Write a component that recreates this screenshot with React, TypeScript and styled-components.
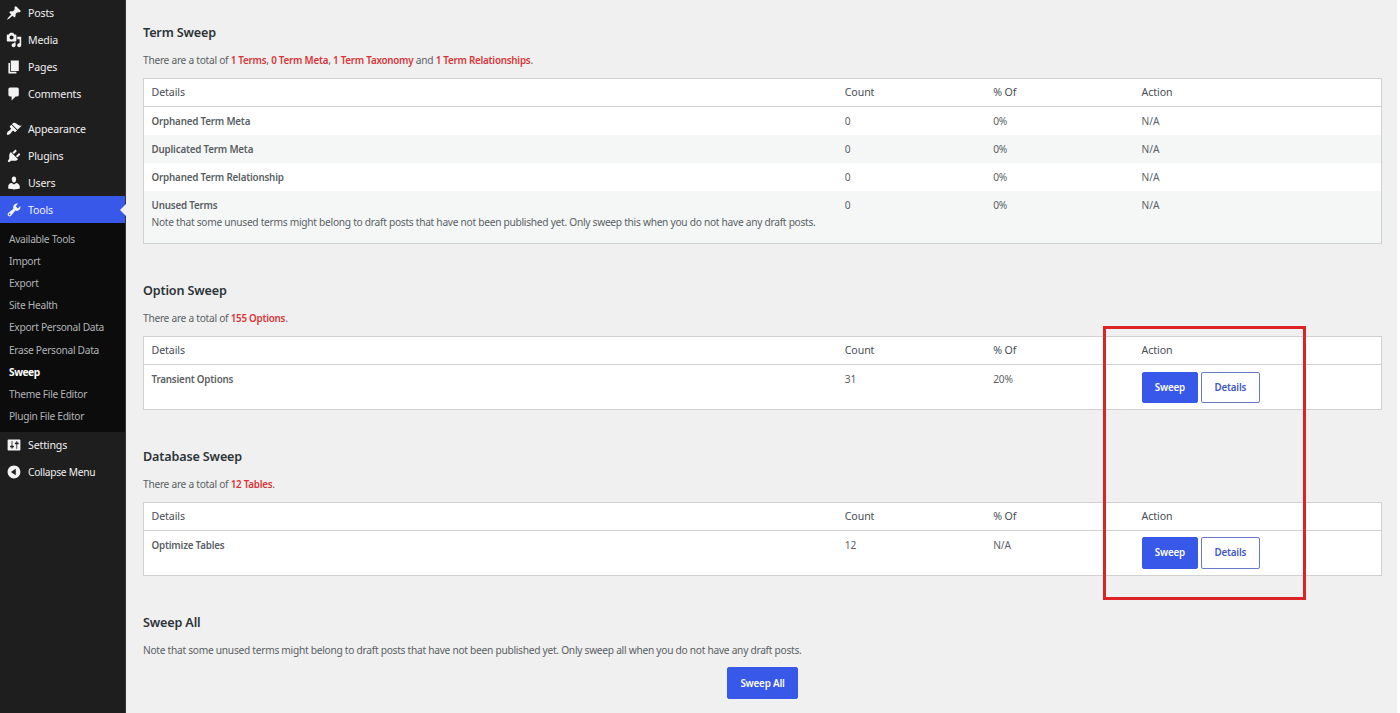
import React from "react";
import styled, { createGlobalStyle, css } from "styled-components";

const GlobalStyle = createGlobalStyle`
  * { box-sizing: border-box; }
  html, body { margin: 0; padding: 0; background: #fdfdfd; }
  body {
    font-family: "Noto Sans", "Open Sans", sans-serif;
    font-size: 10.2px;
    color: #5a5f64;
    overflow: hidden;
  }
`;

const Page = styled.div`
  position: relative;
  display: flex;
  width: 1400px;
  height: 713px;
  overflow: hidden;
  background: #fdfdfd;
`;

const Sidebar = styled.nav`
  flex: none;
  width: 126px;
  background: #1e1e1e;
  border-right: 1px solid #343434;
`;

const MenuGroup = styled.div`
  padding-bottom: 8.6px;
`;

const MenuItem = styled.div<{ $active?: boolean }>`
  position: relative;
  display: flex;
  align-items: center;
  height: 26.8px;
  padding-left: 6px;
  gap: 6px;
  color: #f0f0f1;
  white-space: nowrap;
  background: ${(p) => (p.$active ? "#3858e9" : "transparent")};
  ${(p) =>
    p.$active &&
    css`
      &::after {
        content: "";
        position: absolute;
        right: -1px;
        top: 7.4px;
        border: 6px solid transparent;
        border-left: 0;
        border-right-color: #f0f0f1;
      }
    `}
`;

const MenuIcon = styled.svg`
  flex: none;
  width: 16px;
  height: 16px;
  fill: #f3f3f3;
`;

const Label = styled.span<{ $small?: boolean }>`
  font-size: ${(p) => (p.$small ? 10.2 : 10.6)}px;
  letter-spacing: ${(p) => (p.$small ? -0.27 : -0.15)}px;
`;

const SubMenu = styled.div`
  padding: 4.9px 0 4.9px 9px;
  background: #0c0c0d;
`;

const SubItem = styled.div<{ $current?: boolean }>`
  height: 22.15px;
  line-height: 22.15px;
  white-space: nowrap;
  letter-spacing: ${(p) => (p.$current ? -0.45 : -0.3)}px;
  font-weight: ${(p) => (p.$current ? 700 : 400)};
  color: ${(p) => (p.$current ? "#fff" : "#b1b3b5")};
`;

const Content = styled.main`
  flex: none;
  width: 1271px;
  padding: 22.3px 15px 0 17px;
  background: #f0f0f0;
`;

const Section = styled.section<{ $height: number }>`
  height: ${(p) => p.$height}px;
`;

const Heading = styled.h3`
  margin: 0;
  height: 20px;
  line-height: 22px;
  font-size: 12.6px;
  font-weight: 600;
  letter-spacing: -0.15px;
  color: #2c3338;
`;

const Summary = styled.p`
  margin: 10px 0 9.7px;
  height: 16px;
  line-height: 16px;
  letter-spacing: -0.275px;
`;

const Total = styled.strong`
  font-size: 9.8px;
  font-weight: 600;
  letter-spacing: -0.23px;
  color: #d63638;
`;

const Table = styled.div`
  border: 1px solid #cfd1d3;
  background: #fff;
`;

const Row = styled.div<{ $height: number; $striped?: boolean }>`
  display: grid;
  grid-template-columns: 56% 12% 12% 20%;
  height: ${(p) => p.$height}px;
  padding-top: 6px;
  line-height: 17px;
  letter-spacing: -0.12px;
  background: ${(p) => (p.$striped ? "#f5f7f7" : "#fff")};
`;

const HeaderRow = styled(Row)`
  padding-top: 5px;
  font-size: 10.6px;
  letter-spacing: -0.08px;
  color: #484e53;
  border-bottom: 1px solid #cfd1d3;
`;

const Cell = styled.div`
  padding-left: 8px;
  white-space: nowrap;

  &:first-child {
    padding-left: 7.5px;
  }
`;

const Name = styled.strong`
  display: block;
  font-size: 9.8px;
  font-weight: 600;
  letter-spacing: -0.19px;
`;

const Note = styled.span`
  letter-spacing: -0.28px;
`;

const Actions = styled.div`
  display: flex;
  gap: 3px;
  padding-top: 0.3px;
`;

const Button = styled.button<{ $primary?: boolean; $width: number }>`
  width: ${(p) => p.$width}px;
  height: 31.5px;
  padding: 0 0 0.4px;
  font: 600 9.8px "Noto Sans", "Open Sans", sans-serif;
  letter-spacing: -0.18px;
  border: 1px solid ${(p) => (p.$primary ? "#3858e9" : "#6a79c8")};
  border-radius: 2px;
  color: ${(p) => (p.$primary ? "#fff" : "#4458c4")};
  background: ${(p) => (p.$primary ? "#3858e9" : "#fff")};
`;

const Centered = styled.div`
  display: flex;
  justify-content: center;
`;

const Highlight = styled.div`
  position: absolute;
  left: 1103px;
  top: 326px;
  width: 203px;
  height: 274px;
  border: 3px solid #dc2426;
  pointer-events: none;
`;

const icons = {
  posts:
    "M10.44 3.02l1.82-1.82 6.36 6.35-1.83 1.82c-1.05-.68-2.48-.57-3.41.36l-.75.75c-.92.93-1.04 2.35-.35 3.41l-1.83 1.82-2.41-2.41-2.8 2.79c-.42.42-3.38 2.71-3.8 2.29s1.86-3.39 2.28-3.81l2.79-2.79L4.1 9.36l1.83-1.82c1.05.69 2.48.57 3.4-.36l.75-.75c.93-.92 1.05-2.35.36-3.41z",
  media:
    "M13 11V4c0-.55-.45-1-1-1h-1.67L9 1H5L3.67 3H2c-.55 0-1 .45-1 1v7c0 .55.45 1 1 1h10c.55 0 1-.45 1-1zM7 4.5c1.38 0 2.5 1.12 2.5 2.5S8.38 9.5 7 9.5 4.5 8.38 4.5 7 5.62 4.5 7 4.5zM14 6h5v10.5c0 1.38-1.12 2.5-2.5 2.5S14 17.88 14 16.5s1.12-2.5 2.5-2.5c.17 0 .34.02.5.05V9h-3V6zm-4 8.05V13h2v3.5c0 1.38-1.12 2.5-2.5 2.5S7 17.88 7 16.5 8.12 14 9.5 14c.17 0 .34.02.5.05z",
  pages: "M6 15V2h10v13H6zm-1 1h8v2H3V5h2v11z",
  comments:
    "M5 2h9c1.1 0 2 .9 2 2v7c0 1.1-.9 2-2 2h-2l-5 5v-5H5c-1.1 0-2-.9-2-2V4c0-1.1.9-2 2-2z",
  appearance:
    "M14.48 11.06L7.41 3.99l1.5-1.5c.5-.56 2.3-.47 3.51.32 1.21.8 1.43 1.28 2.91 2.1 1.18.64 2.45 1.26 4.45.85zm-.71.71L6.7 4.7 4.93 6.47c-.39.39-.39 1.02 0 1.41l1.06 1.06c.39.39.39 1.03 0 1.42-.6.6-1.43 1.11-2.21 1.69-.35.26-.7.53-1.01.84C1.43 14.23.4 16.08 1.4 17.07c.99 1 2.84-.03 4.18-1.36.31-.31.58-.66.85-1.02.57-.78 1.08-1.61 1.69-2.21.39-.39 1.02-.39 1.41 0l1.06 1.06c.39.39 1.02.39 1.41 0z",
  plugins:
    "M13.11 4.36L9.87 7.6 8 5.73l3.24-3.24c.35-.34 1.05-.2 1.56.32.52.51.66 1.21.31 1.55zm-8 1.77l.91-1.12 9.01 9.01-1.19.84c-.71.71-2.63 1.16-3.82 1.16H6.14L4.9 17.26c-.59.59-1.54.59-2.12 0-.59-.58-.59-1.53 0-2.12l1.24-1.24v-3.88c0-1.13.4-3.19 1.09-3.89zm7.26 3.97l3.24-3.24c.34-.35 1.04-.21 1.55.31.52.51.66 1.21.31 1.55l-3.24 3.25z",
  users:
    "M10 9.25c-2.27 0-2.73-3.44-2.73-3.44C7 4.02 7.82 2 9.97 2c2.16 0 2.98 2.02 2.71 3.81 0 0-.41 3.44-2.68 3.44zm0 2.57L12.72 10c2.39 0 4.52 2.33 4.52 4.53v2.49s-3.65 1.13-7.24 1.13c-3.65 0-7.24-1.13-7.24-1.13v-2.49c0-2.25 1.94-4.48 4.47-4.48z",
  tools:
    "M16.68 9.77c-1.34 1.34-3.3 1.67-4.95.99l-5.41 6.52c-.99.99-2.59.99-3.58 0s-.99-2.59 0-3.57l6.52-5.42c-.68-1.65-.35-3.61.99-4.95 1.28-1.28 3.12-1.62 4.72-1.06l-2.89 2.89 2.82 2.82 2.86-2.87c.53 1.58.18 3.39-1.08 4.65zM3.81 16.21c.4.39 1.04.39 1.43 0 .4-.4.4-1.04 0-1.43-.39-.4-1.03-.4-1.43 0-.39.39-.39 1.03 0 1.43z",
  settings:
    "M18 16V4c0-.55-.45-1-1-1H3c-.55 0-1 .45-1 1v12c0 .55.45 1 1 1h14c.55 0 1-.45 1-1zM8 11h1c.55 0 1 .45 1 1s-.45 1-1 1H8v1.5c0 .28-.22.5-.5.5s-.5-.22-.5-.5V13H6c-.55 0-1-.45-1-1s.45-1 1-1h1V5.5c0-.28.22-.5.5-.5s.5.22.5.5V11zm5-2h-1c-.55 0-1-.45-1-1s.45-1 1-1h1V5.5c0-.28.22-.5.5-.5s.5.22.5.5V7h1c.55 0 1 .45 1 1s-.45 1-1 1h-1v5.5c0 .28-.22.5-.5.5s-.5-.22-.5-.5V9z",
  collapse:
    "M10 2c4.42 0 8 3.58 8 8s-3.58 8-8 8-8-3.58-8-8 3.58-8 8-8zm2.2 12V6L6.2 10z",
};

type IconName = keyof typeof icons;

function NavItem({
  icon,
  label,
  active,
  small,
}: {
  icon: IconName;
  label: string;
  active?: boolean;
  small?: boolean;
}) {
  return (
    <MenuItem $active={active}>
      <MenuIcon viewBox="0 0 20 20">
        <path d={icons[icon]} fillRule="evenodd" />
      </MenuIcon>
      <Label $small={small}>{label}</Label>
    </MenuItem>
  );
}

function TableHeader() {
  return (
    <HeaderRow $height={28.3}>
      <Cell>Details</Cell>
      <Cell>Count</Cell>
      <Cell>% Of</Cell>
      <Cell>Action</Cell>
    </HeaderRow>
  );
}

const termRows = [
  { name: "Orphaned Term Meta", height: 28 },
  { name: "Duplicated Term Meta", height: 28 },
  { name: "Orphaned Term Relationship", height: 27.7 },
  {
    name: "Unused Terms",
    height: 52.5,
    note: "Note that some unused terms might belong to draft posts that have not been published yet. Only sweep this when you do not have any draft posts.",
  },
];

function SweepTable({ name, count, percent }: { name: string; count: string; percent: string }) {
  return (
    <Table>
      <TableHeader />
      <Row $height={43.5}>
        <Cell>
          <Name>{name}</Name>
        </Cell>
        <Cell>{count}</Cell>
        <Cell>{percent}</Cell>
        <Cell>
          <Actions>
            <Button $primary $width={56.5}>
              Sweep
            </Button>
            <Button $width={58.5}>Details</Button>
          </Actions>
        </Cell>
      </Row>
    </Table>
  );
}

const subItems = [
  "Available Tools",
  "Import",
  "Export",
  "Site Health",
  "Export Personal Data",
  "Erase Personal Data",
  "Sweep",
  "Theme File Editor",
  "Plugin File Editor",
];

export default function App() {
  return (
    <Page>
      <GlobalStyle />
      <Sidebar>
        <MenuGroup>
          <NavItem icon="posts" label="Posts" />
          <NavItem icon="media" label="Media" />
          <NavItem icon="pages" label="Pages" />
          <NavItem icon="comments" label="Comments" />
        </MenuGroup>
        <NavItem icon="appearance" label="Appearance" />
        <NavItem icon="plugins" label="Plugins" />
        <NavItem icon="users" label="Users" />
        <NavItem icon="tools" label="Tools" active />
        <SubMenu>
          {subItems.map((item) => (
            <SubItem key={item} $current={item === "Sweep"}>
              {item}
            </SubItem>
          ))}
        </SubMenu>
        <NavItem icon="settings" label="Settings" />
        <NavItem icon="collapse" label="Collapse Menu" small />
      </Sidebar>
      <Content>
        <Section $height={258}>
          <Heading>Term Sweep</Heading>
          <Summary>
            There are a total of <Total>1 Terms</Total>, <Total>0 Term Meta</Total>,{" "}
            <Total>1 Term Taxonomy</Total> and <Total>1 Term Relationships</Total>.
          </Summary>
          <Table>
            <TableHeader />
            {termRows.map((row, i) => (
              <Row key={row.name} $height={row.height} $striped={i % 2 === 1}>
                <Cell>
                  <Name>{row.name}</Name>
                  {row.note && <Note>{row.note}</Note>}
                </Cell>
                <Cell>0</Cell>
                <Cell>0%</Cell>
                <Cell>N/A</Cell>
              </Row>
            ))}
          </Table>
        </Section>
        <Section $height={165.8}>
          <Heading>Option Sweep</Heading>
          <Summary>
            There are a total of <Total>155 Options</Total>.
          </Summary>
          <SweepTable name="Transient Options" count="31" percent="20%" />
        </Section>
        <Section $height={165.7}>
          <Heading>Database Sweep</Heading>
          <Summary>
            There are a total of <Total>12 Tables</Total>.
          </Summary>
          <SweepTable name="Optimize Tables" count="12" percent="N/A" />
        </Section>
        <Section $height={101}>
          <Heading>Sweep All</Heading>
          <Summary>
            Note that some unused terms might belong to draft posts that have not been published
            yet. Only sweep all when you do not have any draft posts.
          </Summary>
          <Centered>
            <Button $primary $width={71.5}>
              Sweep All
            </Button>
          </Centered>
        </Section>
      </Content>
      <Highlight />
    </Page>
  );
}
